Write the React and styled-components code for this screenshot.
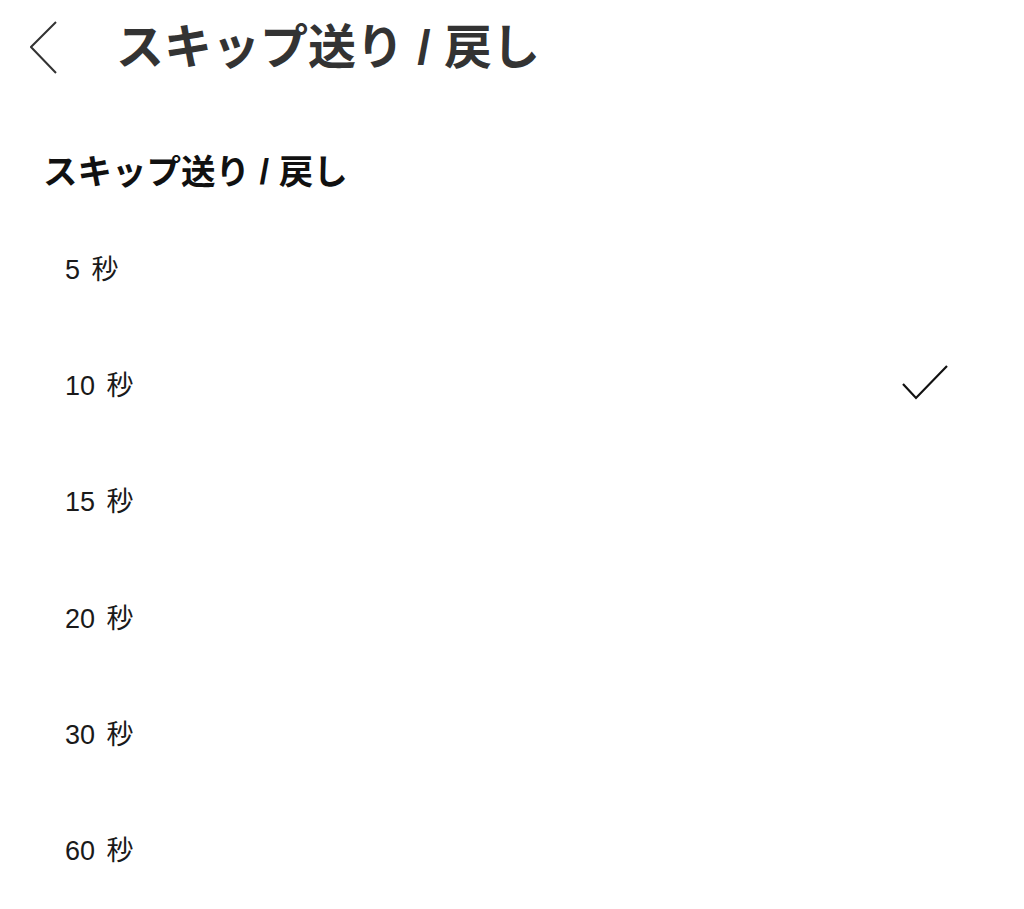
import styled, { createGlobalStyle } from "styled-components";

const GlobalStyle = createGlobalStyle`
  body {
    margin: 0;
    background: #fff;
    font-family: "Liberation Sans", "Noto Sans CJK JP", sans-serif;
  }
`;

const Page = styled.div`
  width: 1024px;
  min-height: 909px;
  background: #fff;
`;

const Header = styled.header`
  height: 95px;
  display: flex;
  align-items: center;
  padding-left: 30px;
`;

const BackButton = styled.button`
  border: none;
  background: none;
  padding: 0;
  width: 28px;
  height: 54px;
  display: flex;
  align-items: center;
  margin-right: 58px;
  cursor: pointer;
`;

const Title = styled.h1`
  margin: 0;
  font-size: 48px;
  font-weight: 600;
  color: #333;
  line-height: 1;
`;

const SectionTitle = styled.h2`
  margin: 0;
  padding: 57px 0 0 43px;
  height: 40px;
  font-size: 34.5px;
  font-weight: 700;
  color: #111;
  line-height: 40px;
`;

const List = styled.ul`
  list-style: none;
  margin: 0;
  padding: 0;
  margin-top: 17px;
`;

const Row = styled.li`
  height: 116.3px;
  display: flex;
  align-items: center;
  justify-content: space-between;
  padding: 0 76px 0 65px;
  font-size: 27px;
  word-spacing: 4px;
  color: #1a1a1a;
`;

const Check = () => (
  <svg width="46" height="36" viewBox="0 0 46 36">
    <path d="M1 19 L14 33 L45 1" fill="none" stroke="#111" strokeWidth="2.2" />
  </svg>
);

const options = [5, 10, 15, 20, 30, 60];

export default function App() {
  const selected = 10;
  return (
    <Page>
      <GlobalStyle />
      <Header>
        <BackButton aria-label="戻る">
          <svg width="28" height="54" viewBox="0 0 28 54">
            <path d="M26 1 L1 26 L26 52" fill="none" stroke="#333" strokeWidth="2" />
          </svg>
        </BackButton>
        <Title>スキップ送り / 戻し</Title>
      </Header>
      <SectionTitle>スキップ送り / 戻し</SectionTitle>
      <List>
        {options.map((s) => (
          <Row key={s}>
            <span>{s} 秒</span>
            {s === selected && <Check />}
          </Row>
        ))}
      </List>
    </Page>
  );
}
